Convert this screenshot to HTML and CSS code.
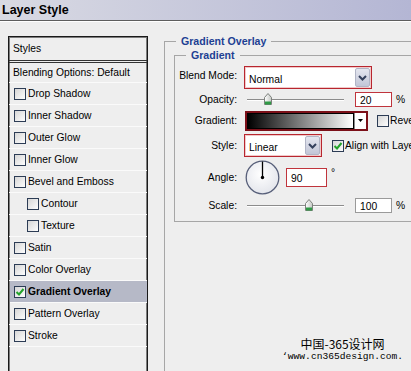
FILE: index.html
```html
<!DOCTYPE html>
<html lang="en">
<head>
    <meta charset="UTF-8">
    <meta name="viewport" content="width=device-width, initial-scale=1.0">
    <title>Layer Style</title>
    <link rel="stylesheet" href="styles.css">
</head>
<body>
    <div class="titlebar">Layer Style</div>
    <div class="dialog">
        <div class="styles-list">
            <div class="list-head">Styles</div>
            <div class="list-row blending">Blending Options: Default</div>
            <div class="list-row"><span class="check"></span>Drop Shadow</div>
            <div class="list-row"><span class="check"></span>Inner Shadow</div>
            <div class="list-row"><span class="check"></span>Outer Glow</div>
            <div class="list-row"><span class="check"></span>Inner Glow</div>
            <div class="list-row"><span class="check"></span>Bevel and Emboss</div>
            <div class="list-row sub"><span class="check"></span>Contour</div>
            <div class="list-row sub"><span class="check"></span>Texture</div>
            <div class="list-row"><span class="check"></span>Satin</div>
            <div class="list-row"><span class="check"></span>Color Overlay</div>
            <div class="list-row active">
                <span class="check"><svg width="10" height="10" viewBox="0 0 10 10"><polyline points="1.5,5 4,7.5 8.5,2" fill="none" stroke="#22a329" stroke-width="2"/></svg></span>Gradient Overlay
            </div>
            <div class="list-row"><span class="check"></span>Pattern Overlay</div>
            <div class="list-row"><span class="check"></span>Stroke</div>
        </div>

        <div class="settings">
            <fieldset class="group">
                <legend>Gradient Overlay</legend>
                <fieldset class="group inner">
                    <legend>Gradient</legend>

                    <div class="field r-blend">
                        <label>Blend Mode:</label>
                        <div class="select">
                            <span class="select-text">Normal</span>
                            <span class="drop"><svg width="9" height="6" viewBox="0 0 9 6"><polyline points="1,1 4.5,4.5 8,1" fill="none" stroke="#34405c" stroke-width="2"/></svg></span>
                        </div>
                    </div>

                    <div class="field r-opacity">
                        <label>Opacity:</label>
                        <div class="slider">
                            <div class="rail">
                                <span class="thumb" style="left: 20%"><svg width="8" height="12" viewBox="0 0 8 12"><defs><linearGradient id="tg1" x1="0" y1="0" x2="1" y2="0"><stop offset="0" stop-color="#ffffff"/><stop offset="1" stop-color="#c4c7c4"/></linearGradient></defs><path d="M0.5,4.5 L4,0.5 L7.5,4.5 V11.5 H0.5 Z" fill="url(#tg1)" stroke="#7c807c"/><rect x="1" y="8.5" width="6" height="3" fill="#2f9a45"/></svg></span>
                            </div>
                        </div>
                        <div class="num red">20</div>
                        <span class="unit">%</span>
                    </div>

                    <div class="field r-gradient">
                        <label>Gradient:</label>
                        <div class="gradient">
                            <span class="ramp"></span>
                            <span class="ramp-drop"><svg width="5" height="3" viewBox="0 0 5 3"><polygon points="0,0 5,0 2.5,3" fill="#000"/></svg></span>
                        </div>
                        <span class="check reverse"></span><span class="opt">Reverse</span>
                    </div>

                    <div class="field r-style">
                        <label>Style:</label>
                        <div class="select short">
                            <span class="select-text">Linear</span>
                            <span class="drop"><svg width="9" height="6" viewBox="0 0 9 6"><polyline points="1,1 4.5,4.5 8,1" fill="none" stroke="#34405c" stroke-width="2"/></svg></span>
                        </div>
                        <span class="check align"><svg width="10" height="10" viewBox="0 0 10 10"><polyline points="1.5,5 4,7.5 8.5,2" fill="none" stroke="#22a329" stroke-width="2"/></svg></span><span class="opt">Align with Layer</span>
                    </div>

                    <div class="field r-angle">
                        <label>Angle:</label>
                        <svg class="dial" width="35" height="35" viewBox="0 0 35 35">
                            <defs>
                                <radialGradient id="dialFill" cx="0.45" cy="0.4" r="0.6">
                                    <stop offset="0" stop-color="#ffffff"/>
                                    <stop offset="1" stop-color="#e4e6ec"/>
                                </radialGradient>
                            </defs>
                            <circle cx="17.5" cy="17.5" r="16.3" fill="url(#dialFill)" stroke="#58607a" stroke-width="1.3"/>
                            <line x1="17.5" y1="17.5" x2="17.5" y2="1.5" stroke="#000" stroke-width="1.3"/>
                            <circle cx="17.5" cy="17.5" r="1.7" fill="#000"/>
                        </svg>
                        <div class="num red angle">90</div>
                        <span class="deg">°</span>
                    </div>

                    <div class="field r-scale">
                        <label>Scale:</label>
                        <div class="slider">
                            <div class="rail">
                                <span class="thumb" style="left: 65%"><svg width="8" height="12" viewBox="0 0 8 12"><defs><linearGradient id="tg2" x1="0" y1="0" x2="1" y2="0"><stop offset="0" stop-color="#ffffff"/><stop offset="1" stop-color="#c4c7c4"/></linearGradient></defs><path d="M0.5,4.5 L4,0.5 L7.5,4.5 V11.5 H0.5 Z" fill="url(#tg2)" stroke="#7c807c"/><rect x="1" y="8.5" width="6" height="3" fill="#2f9a45"/></svg></span>
                            </div>
                        </div>
                        <div class="num">100</div>
                        <span class="unit">%</span>
                    </div>
                </fieldset>
            </fieldset>
        </div>
    </div>

    <div class="watermark">
        <div class="wm-cn">中国-365设计网</div>
        <div class="wm-url">‘www.cn365design.com.</div>
    </div>
</body>
</html>
```

FILE: styles.css
```css
html, body {
    margin: 0;
    padding: 0;
}

body {
    position: relative;
    width: 411px;
    height: 371px;
    overflow: hidden;
    background-color: #eeeeee;
    font-family: "Liberation Sans", Arial, sans-serif;
    font-size: 10.3px;
    color: #000;
}

.titlebar {
    height: 20px;
    line-height: 20px;
    padding-left: 2px;
    font-size: 12.5px;
    font-weight: bold;
    background: linear-gradient(to right, #d9dae3, #b4b6d4);
    border-bottom: 1px solid #5e5e5e;
    box-shadow: 0 1px 0 #ffffff;
}

.dialog {
    display: flex;
    align-items: flex-start;
}

/* left list of effects */
.styles-list {
    flex: none;
    width: 138px;
    height: 345px;
    margin: 15px 0 0 8px;
    border: 1px solid #1a1a1a;
    border-bottom: none;
    box-shadow: inset 1px 1px 0 #7c7c7c, inset -1px 0 0 #7c7c7c;
}

.list-head {
    height: 23px;
    line-height: 23px;
    padding-left: 4px;
    border-bottom: 3px double #333;
}

.list-row {
    display: flex;
    align-items: center;
    height: 21px;
    padding-left: 5px;
    border-bottom: 1px solid #fafafa;
    white-space: nowrap;
}

.list-row.blending {
    height: 19px;
    padding-left: 4px;
}

.list-row.sub {
    padding-left: 18px;
}

.list-row.active {
    margin-left: 1px;
    padding-left: 4px;
    background-color: #b6b9c7;
    font-weight: bold;
}

.check {
    flex: none;
    display: flex;
    align-items: center;
    justify-content: center;
    width: 10px;
    height: 10px;
    margin-right: 2px;
    border: 1px solid #2c3c55;
    background: linear-gradient(135deg, #d6d6d6, #fdfdfd);
}

/* right settings */
.settings {
    flex: none;
    margin: 13px 0 0 16px;
}

.group {
    box-sizing: border-box;
    width: 300px;
    height: 350px;
    margin: 0;
    padding: 0 0 0 9px;
    border: 1px solid #a6a6a6;
    min-width: 0;
}

.group > legend {
    margin-left: 2px;
    padding: 0 5px;
    line-height: 14px;
    font-size: 10.6px;
    font-weight: bold;
    color: #1d3f93;
}

.group.inner {
    width: 280px;
    height: auto;
    padding: 4px 0 5px 0;
}

.group.inner > legend {
    margin-left: 11px;
}

.field {
    display: flex;
    align-items: center;
    white-space: nowrap;
}

.field > label {
    flex: none;
    width: 62px;
    text-align: right;
}

.r-blend { height: 23px; }
.r-opacity { height: 21px; }
.r-gradient { height: 21px; }
.r-style { height: 29px; }
.r-angle { height: 34px; }
.r-scale { height: 22px; }

.r-blend > label {
    margin-top: -5px;
}

.select {
    box-sizing: border-box;
    display: flex;
    align-items: center;
    justify-content: space-between;
    width: 128px;
    height: 23px;
    margin-left: 7px;
    padding: 0 1px 0 4px;
    border: 1px solid #b8262f;
    box-shadow: inset 0 0 0 1px #f1c9c9;
    background-color: #fff;
}

.select.short {
    width: 78px;
}

.select-text {
    padding-top: 3px;
}

.drop {
    box-sizing: border-box;
    display: flex;
    align-items: center;
    justify-content: center;
    width: 15px;
    height: 19px;
    border: 1px solid #b1b5c6;
    border-radius: 2px;
    background: linear-gradient(#e4e6ef, #c2c6d7);
}

.slider {
    flex: none;
    width: 91px;
    height: 13px;
    margin-left: 10px;
    padding: 0 3px;
    background: linear-gradient(to bottom, transparent 6px, #8c8c8c 6px, #8c8c8c 7px, #ffffff 7px, #ffffff 8px, transparent 8px);
}

.rail {
    position: relative;
    height: 13px;
}

.thumb {
    position: absolute;
    top: 0;
    margin-left: -4px;
    width: 8px;
    height: 12px;
    display: block;
}

.thumb svg {
    display: block;
}

.num {
    box-sizing: border-box;
    flex: none;
    width: 37px;
    height: 15px;
    line-height: 13px;
    margin-left: 11px;
    padding: 1px 0 0 4px;
    border: 1px solid #9a9a9a;
    background-color: #fff;
}

.num.red {
    border-color: #c0343c;
}

.num.angle {
    width: 41px;
    height: 19px;
    line-height: 17px;
    margin-left: 6px;
    padding-top: 1px;
}

.unit {
    margin-left: 4px;
}

.deg {
    align-self: flex-start;
    margin: 7px 0 0 4px;
}

.gradient {
    box-sizing: border-box;
    display: flex;
    flex: none;
    width: 123px;
    height: 20px;
    margin-left: 8px;
    border: 2px solid #7c1019;
}

.ramp {
    flex: 1;
    border: 1px solid #000;
    background: linear-gradient(to right, #000000, #ffffff);
}

.ramp-drop {
    display: flex;
    align-items: center;
    justify-content: center;
    width: 11px;
    border-left: 1px solid #8a8a8a;
    background-color: #fff;
}

.check.reverse {
    margin-left: 9px;
    margin-right: 1px;
}

.check.align {
    margin-left: 10px;
    margin-right: 1px;
}

.dial {
    flex: none;
    margin-left: 8px;
}

.watermark {
    position: absolute;
    right: 8px;
    bottom: 9px;
    text-align: center;
    color: #000;
}

.wm-cn {
    font-family: "Noto Sans CJK SC", sans-serif;
    font-size: 12px;
    line-height: 14px;
}

.wm-url {
    font-family: "Liberation Mono", monospace;
    font-size: 9.6px;
    line-height: 11px;
}
```
